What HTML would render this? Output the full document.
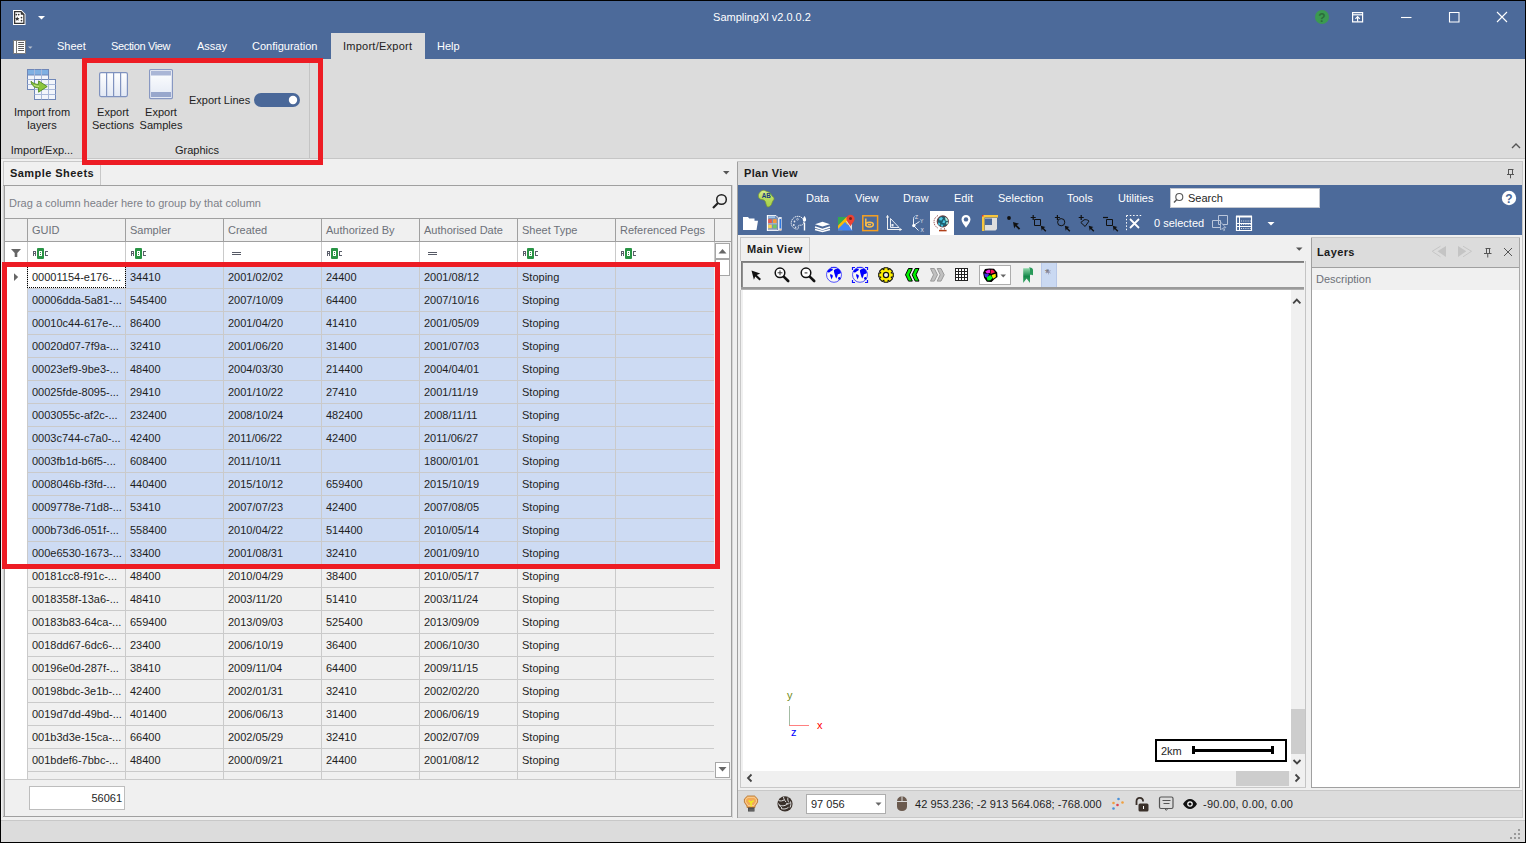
<!DOCTYPE html><html><head><meta charset="utf-8"><style>
html,body{margin:0;padding:0;}
body{width:1526px;height:843px;position:relative;overflow:hidden;background:#f0f0f0;font-family:"Liberation Sans",sans-serif;font-size:11px;}
.a{position:absolute;}
.t{position:absolute;white-space:nowrap;}
svg{display:block}
</style></head><body>
<div class="a" style="left:0px;top:0px;width:1526px;height:843px;background:#000;"></div>
<div class="a" style="left:1px;top:1px;width:1524px;height:841px;background:#f0f0f0;"></div>
<div class="a" style="left:1px;top:1px;width:1524px;height:58px;background:#4c6a9a;"></div>
<div class="t" style="left:562px;width:400px;text-align:center;top:12px;color:#fff;font-size:11px;line-height:11px;font-weight:normal;">SamplingXl v2.0.0.2</div>
<div class="t" style="left:57px;top:41px;color:#fff;font-size:11px;line-height:11px;font-weight:normal;">Sheet</div>
<div class="t" style="left:111px;top:41px;color:#fff;font-size:11px;line-height:11px;font-weight:normal;letter-spacing:-0.35px">Section View</div>
<div class="t" style="left:197px;top:41px;color:#fff;font-size:11px;line-height:11px;font-weight:normal;">Assay</div>
<div class="t" style="left:252px;top:41px;color:#fff;font-size:11px;line-height:11px;font-weight:normal;">Configuration</div>
<div class="a" style="left:331px;top:33px;width:94px;height:26px;background:#dcdcdc;"></div>
<div class="t" style="left:343px;top:41px;color:#222;font-size:11px;line-height:11px;font-weight:normal;letter-spacing:0.25px">Import/Export</div>
<div class="t" style="left:437px;top:41px;color:#fff;font-size:11px;line-height:11px;font-weight:normal;">Help</div>
<div class="a" style="left:1px;top:59px;width:1524px;height:99px;background:#dcdcdc;"></div>
<div class="a" style="left:1px;top:158px;width:1524px;height:1px;background:#c6c6c6;"></div>
<div class="t" style="left:-158px;width:400px;text-align:center;top:107px;color:#222;font-size:11px;line-height:11px;font-weight:normal;">Import from</div>
<div class="t" style="left:-158px;width:400px;text-align:center;top:120px;color:#222;font-size:11px;line-height:11px;font-weight:normal;">layers</div>
<div class="t" style="left:-158px;width:400px;text-align:center;top:145px;color:#222;font-size:11px;line-height:11px;font-weight:normal;">Import/Exp...</div>
<div class="t" style="left:-87px;width:400px;text-align:center;top:107px;color:#222;font-size:11px;line-height:11px;font-weight:normal;">Export</div>
<div class="t" style="left:-87px;width:400px;text-align:center;top:120px;color:#222;font-size:11px;line-height:11px;font-weight:normal;">Sections</div>
<div class="t" style="left:-39px;width:400px;text-align:center;top:107px;color:#222;font-size:11px;line-height:11px;font-weight:normal;">Export</div>
<div class="t" style="left:-39px;width:400px;text-align:center;top:120px;color:#222;font-size:11px;line-height:11px;font-weight:normal;">Samples</div>
<div class="t" style="left:189px;top:95px;color:#222;font-size:11px;line-height:11px;font-weight:normal;">Export Lines</div>
<div class="t" style="left:-3px;width:400px;text-align:center;top:145px;color:#222;font-size:11px;line-height:11px;font-weight:normal;">Graphics</div>
<div class="a" style="left:309px;top:63px;width:1px;height:95px;background:#c4c4c4;"></div>
<div class="a" style="left:3px;top:161px;width:98px;height:25px;background:#f0f0f0;"></div>
<div class="a" style="left:3px;top:161px;width:98px;height:1px;background:#c8c8c8;"></div>
<div class="a" style="left:3px;top:161px;width:1px;height:25px;background:#c8c8c8;"></div>
<div class="a" style="left:100px;top:161px;width:1px;height:25px;background:#c8c8c8;"></div>
<div class="t" style="left:10px;top:168px;color:#1a1a1a;font-size:11px;line-height:11px;font-weight:bold;letter-spacing:0.45px">Sample Sheets</div>
<div class="a" style="left:3px;top:185px;width:729px;height:1px;background:#a0a0a0;"></div>
<div class="a" style="left:2px;top:186px;width:1px;height:632px;background:#e6e6e6;"></div>
<div class="a" style="left:3px;top:186px;width:1px;height:631px;background:#d0d0d0;"></div>
<div class="a" style="left:4px;top:185px;width:1px;height:632px;background:#a0a0a0;"></div>
<div class="a" style="left:731px;top:185px;width:1px;height:632px;background:#a0a0a0;"></div>
<div class="a" style="left:732px;top:185px;width:1px;height:633px;background:#d6d6d6;"></div>
<div class="a" style="left:3px;top:816px;width:729px;height:1px;background:#a0a0a0;"></div>
<div class="a" style="left:5px;top:186px;width:726px;height:32px;background:#f0f0f0;"></div>
<div class="t" style="left:9px;top:198px;color:#7d8088;font-size:11px;line-height:11px;font-weight:normal;">Drag a column header here to group by that column</div>
<div class="a" style="left:5px;top:218px;width:726px;height:1px;background:#a0a0a0;"></div>
<div class="a" style="left:5px;top:219px;width:726px;height:22px;background:#f0f0f0;"></div>
<div class="a" style="left:5px;top:241px;width:726px;height:1px;background:#a0a0a0;"></div>
<div class="a" style="left:27px;top:219px;width:1px;height:22px;background:#a0a0a0;"></div>
<div class="a" style="left:125px;top:219px;width:1px;height:22px;background:#a0a0a0;"></div>
<div class="a" style="left:223px;top:219px;width:1px;height:22px;background:#a0a0a0;"></div>
<div class="a" style="left:321px;top:219px;width:1px;height:22px;background:#a0a0a0;"></div>
<div class="a" style="left:419px;top:219px;width:1px;height:22px;background:#a0a0a0;"></div>
<div class="a" style="left:517px;top:219px;width:1px;height:22px;background:#a0a0a0;"></div>
<div class="a" style="left:615px;top:219px;width:1px;height:22px;background:#a0a0a0;"></div>
<div class="a" style="left:714px;top:219px;width:1px;height:22px;background:#a0a0a0;"></div>
<div class="t" style="left:32px;top:225px;color:#6d7079;font-size:11px;line-height:11px;font-weight:normal;">GUID</div>
<div class="t" style="left:130px;top:225px;color:#6d7079;font-size:11px;line-height:11px;font-weight:normal;">Sampler</div>
<div class="t" style="left:228px;top:225px;color:#6d7079;font-size:11px;line-height:11px;font-weight:normal;">Created</div>
<div class="t" style="left:326px;top:225px;color:#6d7079;font-size:11px;line-height:11px;font-weight:normal;">Authorized By</div>
<div class="t" style="left:424px;top:225px;color:#6d7079;font-size:11px;line-height:11px;font-weight:normal;">Authorised Date</div>
<div class="t" style="left:522px;top:225px;color:#6d7079;font-size:11px;line-height:11px;font-weight:normal;">Sheet Type</div>
<div class="t" style="left:620px;top:225px;color:#6d7079;font-size:11px;line-height:11px;font-weight:normal;">Referenced Pegs</div>
<div class="a" style="left:5px;top:242px;width:710px;height:22px;background:#fff;"></div>
<div class="a" style="left:27px;top:242px;width:1px;height:22px;background:#cacaca;"></div>
<div class="a" style="left:125px;top:242px;width:1px;height:22px;background:#cacaca;"></div>
<div class="a" style="left:223px;top:242px;width:1px;height:22px;background:#cacaca;"></div>
<div class="a" style="left:321px;top:242px;width:1px;height:22px;background:#cacaca;"></div>
<div class="a" style="left:419px;top:242px;width:1px;height:22px;background:#cacaca;"></div>
<div class="a" style="left:517px;top:242px;width:1px;height:22px;background:#cacaca;"></div>
<div class="a" style="left:615px;top:242px;width:1px;height:22px;background:#cacaca;"></div>
<div class="a" style="left:714px;top:242px;width:1px;height:22px;background:#cacaca;"></div>
<div class="a" style="left:5px;top:264px;width:710px;height:1px;background:#cacaca;"></div>
<svg class="a" style="left:0;top:0" width="740" height="300" viewBox="0 0 740 300"><rect x="33" y="251" width="3" height="1" fill="#5a5e6a"/><rect x="33" y="251" width="1" height="5" fill="#5a5e6a"/><rect x="35" y="251" width="1" height="5" fill="#5a5e6a"/><rect x="33" y="253" width="3" height="1" fill="#5a5e6a"/><rect x="37" y="248" width="7" height="11" rx="1" fill="#2a9446"/><rect x="39" y="251" width="3" height="5" fill="#fff"/><rect x="40" y="252" width="1" height="1" fill="#2a9446"/><rect x="40" y="254" width="1" height="1" fill="#2a9446"/><rect x="45" y="251" width="3" height="1" fill="#5a5e6a"/><rect x="45" y="251" width="1" height="5" fill="#5a5e6a"/><rect x="45" y="255" width="3" height="1" fill="#5a5e6a"/><rect x="131" y="251" width="3" height="1" fill="#5a5e6a"/><rect x="131" y="251" width="1" height="5" fill="#5a5e6a"/><rect x="133" y="251" width="1" height="5" fill="#5a5e6a"/><rect x="131" y="253" width="3" height="1" fill="#5a5e6a"/><rect x="135" y="248" width="7" height="11" rx="1" fill="#2a9446"/><rect x="137" y="251" width="3" height="5" fill="#fff"/><rect x="138" y="252" width="1" height="1" fill="#2a9446"/><rect x="138" y="254" width="1" height="1" fill="#2a9446"/><rect x="143" y="251" width="3" height="1" fill="#5a5e6a"/><rect x="143" y="251" width="1" height="5" fill="#5a5e6a"/><rect x="143" y="255" width="3" height="1" fill="#5a5e6a"/><path d="M232 252.5h9M232 254.5h9" stroke="#565a66" stroke-width="1"/><rect x="327" y="251" width="3" height="1" fill="#5a5e6a"/><rect x="327" y="251" width="1" height="5" fill="#5a5e6a"/><rect x="329" y="251" width="1" height="5" fill="#5a5e6a"/><rect x="327" y="253" width="3" height="1" fill="#5a5e6a"/><rect x="331" y="248" width="7" height="11" rx="1" fill="#2a9446"/><rect x="333" y="251" width="3" height="5" fill="#fff"/><rect x="334" y="252" width="1" height="1" fill="#2a9446"/><rect x="334" y="254" width="1" height="1" fill="#2a9446"/><rect x="339" y="251" width="3" height="1" fill="#5a5e6a"/><rect x="339" y="251" width="1" height="5" fill="#5a5e6a"/><rect x="339" y="255" width="3" height="1" fill="#5a5e6a"/><path d="M428 252.5h9M428 254.5h9" stroke="#565a66" stroke-width="1"/><rect x="523" y="251" width="3" height="1" fill="#5a5e6a"/><rect x="523" y="251" width="1" height="5" fill="#5a5e6a"/><rect x="525" y="251" width="1" height="5" fill="#5a5e6a"/><rect x="523" y="253" width="3" height="1" fill="#5a5e6a"/><rect x="527" y="248" width="7" height="11" rx="1" fill="#2a9446"/><rect x="529" y="251" width="3" height="5" fill="#fff"/><rect x="530" y="252" width="1" height="1" fill="#2a9446"/><rect x="530" y="254" width="1" height="1" fill="#2a9446"/><rect x="535" y="251" width="3" height="1" fill="#5a5e6a"/><rect x="535" y="251" width="1" height="5" fill="#5a5e6a"/><rect x="535" y="255" width="3" height="1" fill="#5a5e6a"/><rect x="621" y="251" width="3" height="1" fill="#5a5e6a"/><rect x="621" y="251" width="1" height="5" fill="#5a5e6a"/><rect x="623" y="251" width="1" height="5" fill="#5a5e6a"/><rect x="621" y="253" width="3" height="1" fill="#5a5e6a"/><rect x="625" y="248" width="7" height="11" rx="1" fill="#2a9446"/><rect x="627" y="251" width="3" height="5" fill="#fff"/><rect x="628" y="252" width="1" height="1" fill="#2a9446"/><rect x="628" y="254" width="1" height="1" fill="#2a9446"/><rect x="633" y="251" width="3" height="1" fill="#5a5e6a"/><rect x="633" y="251" width="1" height="5" fill="#5a5e6a"/><rect x="633" y="255" width="3" height="1" fill="#5a5e6a"/></svg>
<div class="a" style="left:5px;top:266px;width:710px;height:513px;overflow:hidden">
<div class="a" style="left:0px;top:0px;width:22px;height:23px;background:#fff"></div>
<div class="a" style="left:22px;top:0px;width:687px;height:22px;background:#cddbf3"></div>
<div class="a" style="left:22px;top:22px;width:687px;height:1px;background:#cacaca"></div>
<div class="a" style="left:120px;top:0px;width:1px;height:23px;background:#cacaca"></div>
<div class="a" style="left:218px;top:0px;width:1px;height:23px;background:#cacaca"></div>
<div class="a" style="left:316px;top:0px;width:1px;height:23px;background:#cacaca"></div>
<div class="a" style="left:414px;top:0px;width:1px;height:23px;background:#cacaca"></div>
<div class="a" style="left:512px;top:0px;width:1px;height:23px;background:#cacaca"></div>
<div class="a" style="left:610px;top:0px;width:1px;height:23px;background:#cacaca"></div>
<div class="t" style="left:27px;top:6px;font-size:11px;line-height:11px;color:#1e1e1e">00001154-e176-...</div>
<div class="t" style="left:125px;top:6px;font-size:11px;line-height:11px;color:#1e1e1e">34410</div>
<div class="t" style="left:223px;top:6px;font-size:11px;line-height:11px;color:#1e1e1e">2001/02/02</div>
<div class="t" style="left:321px;top:6px;font-size:11px;line-height:11px;color:#1e1e1e">24400</div>
<div class="t" style="left:419px;top:6px;font-size:11px;line-height:11px;color:#1e1e1e">2001/08/12</div>
<div class="t" style="left:517px;top:6px;font-size:11px;line-height:11px;color:#1e1e1e">Stoping</div>
<div class="a" style="left:0px;top:23px;width:22px;height:23px;background:#fff"></div>
<div class="a" style="left:22px;top:23px;width:687px;height:22px;background:#cddbf3"></div>
<div class="a" style="left:22px;top:45px;width:687px;height:1px;background:#cacaca"></div>
<div class="a" style="left:120px;top:23px;width:1px;height:23px;background:#cacaca"></div>
<div class="a" style="left:218px;top:23px;width:1px;height:23px;background:#cacaca"></div>
<div class="a" style="left:316px;top:23px;width:1px;height:23px;background:#cacaca"></div>
<div class="a" style="left:414px;top:23px;width:1px;height:23px;background:#cacaca"></div>
<div class="a" style="left:512px;top:23px;width:1px;height:23px;background:#cacaca"></div>
<div class="a" style="left:610px;top:23px;width:1px;height:23px;background:#cacaca"></div>
<div class="t" style="left:27px;top:29px;font-size:11px;line-height:11px;color:#1e1e1e">00006dda-5a81-...</div>
<div class="t" style="left:125px;top:29px;font-size:11px;line-height:11px;color:#1e1e1e">545400</div>
<div class="t" style="left:223px;top:29px;font-size:11px;line-height:11px;color:#1e1e1e">2007/10/09</div>
<div class="t" style="left:321px;top:29px;font-size:11px;line-height:11px;color:#1e1e1e">64400</div>
<div class="t" style="left:419px;top:29px;font-size:11px;line-height:11px;color:#1e1e1e">2007/10/16</div>
<div class="t" style="left:517px;top:29px;font-size:11px;line-height:11px;color:#1e1e1e">Stoping</div>
<div class="a" style="left:0px;top:46px;width:22px;height:23px;background:#fff"></div>
<div class="a" style="left:22px;top:46px;width:687px;height:22px;background:#cddbf3"></div>
<div class="a" style="left:22px;top:68px;width:687px;height:1px;background:#cacaca"></div>
<div class="a" style="left:120px;top:46px;width:1px;height:23px;background:#cacaca"></div>
<div class="a" style="left:218px;top:46px;width:1px;height:23px;background:#cacaca"></div>
<div class="a" style="left:316px;top:46px;width:1px;height:23px;background:#cacaca"></div>
<div class="a" style="left:414px;top:46px;width:1px;height:23px;background:#cacaca"></div>
<div class="a" style="left:512px;top:46px;width:1px;height:23px;background:#cacaca"></div>
<div class="a" style="left:610px;top:46px;width:1px;height:23px;background:#cacaca"></div>
<div class="t" style="left:27px;top:52px;font-size:11px;line-height:11px;color:#1e1e1e">00010c44-617e-...</div>
<div class="t" style="left:125px;top:52px;font-size:11px;line-height:11px;color:#1e1e1e">86400</div>
<div class="t" style="left:223px;top:52px;font-size:11px;line-height:11px;color:#1e1e1e">2001/04/20</div>
<div class="t" style="left:321px;top:52px;font-size:11px;line-height:11px;color:#1e1e1e">41410</div>
<div class="t" style="left:419px;top:52px;font-size:11px;line-height:11px;color:#1e1e1e">2001/05/09</div>
<div class="t" style="left:517px;top:52px;font-size:11px;line-height:11px;color:#1e1e1e">Stoping</div>
<div class="a" style="left:0px;top:69px;width:22px;height:23px;background:#fff"></div>
<div class="a" style="left:22px;top:69px;width:687px;height:22px;background:#cddbf3"></div>
<div class="a" style="left:22px;top:91px;width:687px;height:1px;background:#cacaca"></div>
<div class="a" style="left:120px;top:69px;width:1px;height:23px;background:#cacaca"></div>
<div class="a" style="left:218px;top:69px;width:1px;height:23px;background:#cacaca"></div>
<div class="a" style="left:316px;top:69px;width:1px;height:23px;background:#cacaca"></div>
<div class="a" style="left:414px;top:69px;width:1px;height:23px;background:#cacaca"></div>
<div class="a" style="left:512px;top:69px;width:1px;height:23px;background:#cacaca"></div>
<div class="a" style="left:610px;top:69px;width:1px;height:23px;background:#cacaca"></div>
<div class="t" style="left:27px;top:75px;font-size:11px;line-height:11px;color:#1e1e1e">00020d07-7f9a-...</div>
<div class="t" style="left:125px;top:75px;font-size:11px;line-height:11px;color:#1e1e1e">32410</div>
<div class="t" style="left:223px;top:75px;font-size:11px;line-height:11px;color:#1e1e1e">2001/06/20</div>
<div class="t" style="left:321px;top:75px;font-size:11px;line-height:11px;color:#1e1e1e">31400</div>
<div class="t" style="left:419px;top:75px;font-size:11px;line-height:11px;color:#1e1e1e">2001/07/03</div>
<div class="t" style="left:517px;top:75px;font-size:11px;line-height:11px;color:#1e1e1e">Stoping</div>
<div class="a" style="left:0px;top:92px;width:22px;height:23px;background:#fff"></div>
<div class="a" style="left:22px;top:92px;width:687px;height:22px;background:#cddbf3"></div>
<div class="a" style="left:22px;top:114px;width:687px;height:1px;background:#cacaca"></div>
<div class="a" style="left:120px;top:92px;width:1px;height:23px;background:#cacaca"></div>
<div class="a" style="left:218px;top:92px;width:1px;height:23px;background:#cacaca"></div>
<div class="a" style="left:316px;top:92px;width:1px;height:23px;background:#cacaca"></div>
<div class="a" style="left:414px;top:92px;width:1px;height:23px;background:#cacaca"></div>
<div class="a" style="left:512px;top:92px;width:1px;height:23px;background:#cacaca"></div>
<div class="a" style="left:610px;top:92px;width:1px;height:23px;background:#cacaca"></div>
<div class="t" style="left:27px;top:98px;font-size:11px;line-height:11px;color:#1e1e1e">00023ef9-9be3-...</div>
<div class="t" style="left:125px;top:98px;font-size:11px;line-height:11px;color:#1e1e1e">48400</div>
<div class="t" style="left:223px;top:98px;font-size:11px;line-height:11px;color:#1e1e1e">2004/03/30</div>
<div class="t" style="left:321px;top:98px;font-size:11px;line-height:11px;color:#1e1e1e">214400</div>
<div class="t" style="left:419px;top:98px;font-size:11px;line-height:11px;color:#1e1e1e">2004/04/01</div>
<div class="t" style="left:517px;top:98px;font-size:11px;line-height:11px;color:#1e1e1e">Stoping</div>
<div class="a" style="left:0px;top:115px;width:22px;height:23px;background:#fff"></div>
<div class="a" style="left:22px;top:115px;width:687px;height:22px;background:#cddbf3"></div>
<div class="a" style="left:22px;top:137px;width:687px;height:1px;background:#cacaca"></div>
<div class="a" style="left:120px;top:115px;width:1px;height:23px;background:#cacaca"></div>
<div class="a" style="left:218px;top:115px;width:1px;height:23px;background:#cacaca"></div>
<div class="a" style="left:316px;top:115px;width:1px;height:23px;background:#cacaca"></div>
<div class="a" style="left:414px;top:115px;width:1px;height:23px;background:#cacaca"></div>
<div class="a" style="left:512px;top:115px;width:1px;height:23px;background:#cacaca"></div>
<div class="a" style="left:610px;top:115px;width:1px;height:23px;background:#cacaca"></div>
<div class="t" style="left:27px;top:121px;font-size:11px;line-height:11px;color:#1e1e1e">00025fde-8095-...</div>
<div class="t" style="left:125px;top:121px;font-size:11px;line-height:11px;color:#1e1e1e">29410</div>
<div class="t" style="left:223px;top:121px;font-size:11px;line-height:11px;color:#1e1e1e">2001/10/22</div>
<div class="t" style="left:321px;top:121px;font-size:11px;line-height:11px;color:#1e1e1e">27410</div>
<div class="t" style="left:419px;top:121px;font-size:11px;line-height:11px;color:#1e1e1e">2001/11/19</div>
<div class="t" style="left:517px;top:121px;font-size:11px;line-height:11px;color:#1e1e1e">Stoping</div>
<div class="a" style="left:0px;top:138px;width:22px;height:23px;background:#fff"></div>
<div class="a" style="left:22px;top:138px;width:687px;height:22px;background:#cddbf3"></div>
<div class="a" style="left:22px;top:160px;width:687px;height:1px;background:#cacaca"></div>
<div class="a" style="left:120px;top:138px;width:1px;height:23px;background:#cacaca"></div>
<div class="a" style="left:218px;top:138px;width:1px;height:23px;background:#cacaca"></div>
<div class="a" style="left:316px;top:138px;width:1px;height:23px;background:#cacaca"></div>
<div class="a" style="left:414px;top:138px;width:1px;height:23px;background:#cacaca"></div>
<div class="a" style="left:512px;top:138px;width:1px;height:23px;background:#cacaca"></div>
<div class="a" style="left:610px;top:138px;width:1px;height:23px;background:#cacaca"></div>
<div class="t" style="left:27px;top:144px;font-size:11px;line-height:11px;color:#1e1e1e">0003055c-af2c-...</div>
<div class="t" style="left:125px;top:144px;font-size:11px;line-height:11px;color:#1e1e1e">232400</div>
<div class="t" style="left:223px;top:144px;font-size:11px;line-height:11px;color:#1e1e1e">2008/10/24</div>
<div class="t" style="left:321px;top:144px;font-size:11px;line-height:11px;color:#1e1e1e">482400</div>
<div class="t" style="left:419px;top:144px;font-size:11px;line-height:11px;color:#1e1e1e">2008/11/11</div>
<div class="t" style="left:517px;top:144px;font-size:11px;line-height:11px;color:#1e1e1e">Stoping</div>
<div class="a" style="left:0px;top:161px;width:22px;height:23px;background:#fff"></div>
<div class="a" style="left:22px;top:161px;width:687px;height:22px;background:#cddbf3"></div>
<div class="a" style="left:22px;top:183px;width:687px;height:1px;background:#cacaca"></div>
<div class="a" style="left:120px;top:161px;width:1px;height:23px;background:#cacaca"></div>
<div class="a" style="left:218px;top:161px;width:1px;height:23px;background:#cacaca"></div>
<div class="a" style="left:316px;top:161px;width:1px;height:23px;background:#cacaca"></div>
<div class="a" style="left:414px;top:161px;width:1px;height:23px;background:#cacaca"></div>
<div class="a" style="left:512px;top:161px;width:1px;height:23px;background:#cacaca"></div>
<div class="a" style="left:610px;top:161px;width:1px;height:23px;background:#cacaca"></div>
<div class="t" style="left:27px;top:167px;font-size:11px;line-height:11px;color:#1e1e1e">0003c744-c7a0-...</div>
<div class="t" style="left:125px;top:167px;font-size:11px;line-height:11px;color:#1e1e1e">42400</div>
<div class="t" style="left:223px;top:167px;font-size:11px;line-height:11px;color:#1e1e1e">2011/06/22</div>
<div class="t" style="left:321px;top:167px;font-size:11px;line-height:11px;color:#1e1e1e">42400</div>
<div class="t" style="left:419px;top:167px;font-size:11px;line-height:11px;color:#1e1e1e">2011/06/27</div>
<div class="t" style="left:517px;top:167px;font-size:11px;line-height:11px;color:#1e1e1e">Stoping</div>
<div class="a" style="left:0px;top:184px;width:22px;height:23px;background:#fff"></div>
<div class="a" style="left:22px;top:184px;width:687px;height:22px;background:#cddbf3"></div>
<div class="a" style="left:22px;top:206px;width:687px;height:1px;background:#cacaca"></div>
<div class="a" style="left:120px;top:184px;width:1px;height:23px;background:#cacaca"></div>
<div class="a" style="left:218px;top:184px;width:1px;height:23px;background:#cacaca"></div>
<div class="a" style="left:316px;top:184px;width:1px;height:23px;background:#cacaca"></div>
<div class="a" style="left:414px;top:184px;width:1px;height:23px;background:#cacaca"></div>
<div class="a" style="left:512px;top:184px;width:1px;height:23px;background:#cacaca"></div>
<div class="a" style="left:610px;top:184px;width:1px;height:23px;background:#cacaca"></div>
<div class="t" style="left:27px;top:190px;font-size:11px;line-height:11px;color:#1e1e1e">0003fb1d-b6f5-...</div>
<div class="t" style="left:125px;top:190px;font-size:11px;line-height:11px;color:#1e1e1e">608400</div>
<div class="t" style="left:223px;top:190px;font-size:11px;line-height:11px;color:#1e1e1e">2011/10/11</div>
<div class="t" style="left:419px;top:190px;font-size:11px;line-height:11px;color:#1e1e1e">1800/01/01</div>
<div class="t" style="left:517px;top:190px;font-size:11px;line-height:11px;color:#1e1e1e">Stoping</div>
<div class="a" style="left:0px;top:207px;width:22px;height:23px;background:#fff"></div>
<div class="a" style="left:22px;top:207px;width:687px;height:22px;background:#cddbf3"></div>
<div class="a" style="left:22px;top:229px;width:687px;height:1px;background:#cacaca"></div>
<div class="a" style="left:120px;top:207px;width:1px;height:23px;background:#cacaca"></div>
<div class="a" style="left:218px;top:207px;width:1px;height:23px;background:#cacaca"></div>
<div class="a" style="left:316px;top:207px;width:1px;height:23px;background:#cacaca"></div>
<div class="a" style="left:414px;top:207px;width:1px;height:23px;background:#cacaca"></div>
<div class="a" style="left:512px;top:207px;width:1px;height:23px;background:#cacaca"></div>
<div class="a" style="left:610px;top:207px;width:1px;height:23px;background:#cacaca"></div>
<div class="t" style="left:27px;top:213px;font-size:11px;line-height:11px;color:#1e1e1e">0008046b-f3fd-...</div>
<div class="t" style="left:125px;top:213px;font-size:11px;line-height:11px;color:#1e1e1e">440400</div>
<div class="t" style="left:223px;top:213px;font-size:11px;line-height:11px;color:#1e1e1e">2015/10/12</div>
<div class="t" style="left:321px;top:213px;font-size:11px;line-height:11px;color:#1e1e1e">659400</div>
<div class="t" style="left:419px;top:213px;font-size:11px;line-height:11px;color:#1e1e1e">2015/10/19</div>
<div class="t" style="left:517px;top:213px;font-size:11px;line-height:11px;color:#1e1e1e">Stoping</div>
<div class="a" style="left:0px;top:230px;width:22px;height:23px;background:#fff"></div>
<div class="a" style="left:22px;top:230px;width:687px;height:22px;background:#cddbf3"></div>
<div class="a" style="left:22px;top:252px;width:687px;height:1px;background:#cacaca"></div>
<div class="a" style="left:120px;top:230px;width:1px;height:23px;background:#cacaca"></div>
<div class="a" style="left:218px;top:230px;width:1px;height:23px;background:#cacaca"></div>
<div class="a" style="left:316px;top:230px;width:1px;height:23px;background:#cacaca"></div>
<div class="a" style="left:414px;top:230px;width:1px;height:23px;background:#cacaca"></div>
<div class="a" style="left:512px;top:230px;width:1px;height:23px;background:#cacaca"></div>
<div class="a" style="left:610px;top:230px;width:1px;height:23px;background:#cacaca"></div>
<div class="t" style="left:27px;top:236px;font-size:11px;line-height:11px;color:#1e1e1e">0009778e-71d8-...</div>
<div class="t" style="left:125px;top:236px;font-size:11px;line-height:11px;color:#1e1e1e">53410</div>
<div class="t" style="left:223px;top:236px;font-size:11px;line-height:11px;color:#1e1e1e">2007/07/23</div>
<div class="t" style="left:321px;top:236px;font-size:11px;line-height:11px;color:#1e1e1e">42400</div>
<div class="t" style="left:419px;top:236px;font-size:11px;line-height:11px;color:#1e1e1e">2007/08/05</div>
<div class="t" style="left:517px;top:236px;font-size:11px;line-height:11px;color:#1e1e1e">Stoping</div>
<div class="a" style="left:0px;top:253px;width:22px;height:23px;background:#fff"></div>
<div class="a" style="left:22px;top:253px;width:687px;height:22px;background:#cddbf3"></div>
<div class="a" style="left:22px;top:275px;width:687px;height:1px;background:#cacaca"></div>
<div class="a" style="left:120px;top:253px;width:1px;height:23px;background:#cacaca"></div>
<div class="a" style="left:218px;top:253px;width:1px;height:23px;background:#cacaca"></div>
<div class="a" style="left:316px;top:253px;width:1px;height:23px;background:#cacaca"></div>
<div class="a" style="left:414px;top:253px;width:1px;height:23px;background:#cacaca"></div>
<div class="a" style="left:512px;top:253px;width:1px;height:23px;background:#cacaca"></div>
<div class="a" style="left:610px;top:253px;width:1px;height:23px;background:#cacaca"></div>
<div class="t" style="left:27px;top:259px;font-size:11px;line-height:11px;color:#1e1e1e">000b73d6-051f-...</div>
<div class="t" style="left:125px;top:259px;font-size:11px;line-height:11px;color:#1e1e1e">558400</div>
<div class="t" style="left:223px;top:259px;font-size:11px;line-height:11px;color:#1e1e1e">2010/04/22</div>
<div class="t" style="left:321px;top:259px;font-size:11px;line-height:11px;color:#1e1e1e">514400</div>
<div class="t" style="left:419px;top:259px;font-size:11px;line-height:11px;color:#1e1e1e">2010/05/14</div>
<div class="t" style="left:517px;top:259px;font-size:11px;line-height:11px;color:#1e1e1e">Stoping</div>
<div class="a" style="left:0px;top:276px;width:22px;height:23px;background:#fff"></div>
<div class="a" style="left:22px;top:276px;width:687px;height:22px;background:#cddbf3"></div>
<div class="a" style="left:22px;top:298px;width:687px;height:1px;background:#cacaca"></div>
<div class="a" style="left:120px;top:276px;width:1px;height:23px;background:#cacaca"></div>
<div class="a" style="left:218px;top:276px;width:1px;height:23px;background:#cacaca"></div>
<div class="a" style="left:316px;top:276px;width:1px;height:23px;background:#cacaca"></div>
<div class="a" style="left:414px;top:276px;width:1px;height:23px;background:#cacaca"></div>
<div class="a" style="left:512px;top:276px;width:1px;height:23px;background:#cacaca"></div>
<div class="a" style="left:610px;top:276px;width:1px;height:23px;background:#cacaca"></div>
<div class="t" style="left:27px;top:282px;font-size:11px;line-height:11px;color:#1e1e1e">000e6530-1673-...</div>
<div class="t" style="left:125px;top:282px;font-size:11px;line-height:11px;color:#1e1e1e">33400</div>
<div class="t" style="left:223px;top:282px;font-size:11px;line-height:11px;color:#1e1e1e">2001/08/31</div>
<div class="t" style="left:321px;top:282px;font-size:11px;line-height:11px;color:#1e1e1e">32410</div>
<div class="t" style="left:419px;top:282px;font-size:11px;line-height:11px;color:#1e1e1e">2001/09/10</div>
<div class="t" style="left:517px;top:282px;font-size:11px;line-height:11px;color:#1e1e1e">Stoping</div>
<div class="a" style="left:0px;top:299px;width:22px;height:23px;background:#fff"></div>
<div class="a" style="left:22px;top:299px;width:687px;height:22px;background:#f0f0f0"></div>
<div class="a" style="left:22px;top:321px;width:687px;height:1px;background:#cacaca"></div>
<div class="a" style="left:120px;top:299px;width:1px;height:23px;background:#cacaca"></div>
<div class="a" style="left:218px;top:299px;width:1px;height:23px;background:#cacaca"></div>
<div class="a" style="left:316px;top:299px;width:1px;height:23px;background:#cacaca"></div>
<div class="a" style="left:414px;top:299px;width:1px;height:23px;background:#cacaca"></div>
<div class="a" style="left:512px;top:299px;width:1px;height:23px;background:#cacaca"></div>
<div class="a" style="left:610px;top:299px;width:1px;height:23px;background:#cacaca"></div>
<div class="t" style="left:27px;top:305px;font-size:11px;line-height:11px;color:#1e1e1e">00181cc8-f91c-...</div>
<div class="t" style="left:125px;top:305px;font-size:11px;line-height:11px;color:#1e1e1e">48400</div>
<div class="t" style="left:223px;top:305px;font-size:11px;line-height:11px;color:#1e1e1e">2010/04/29</div>
<div class="t" style="left:321px;top:305px;font-size:11px;line-height:11px;color:#1e1e1e">38400</div>
<div class="t" style="left:419px;top:305px;font-size:11px;line-height:11px;color:#1e1e1e">2010/05/17</div>
<div class="t" style="left:517px;top:305px;font-size:11px;line-height:11px;color:#1e1e1e">Stoping</div>
<div class="a" style="left:0px;top:322px;width:22px;height:23px;background:#fff"></div>
<div class="a" style="left:22px;top:322px;width:687px;height:22px;background:#f0f0f0"></div>
<div class="a" style="left:22px;top:344px;width:687px;height:1px;background:#cacaca"></div>
<div class="a" style="left:120px;top:322px;width:1px;height:23px;background:#cacaca"></div>
<div class="a" style="left:218px;top:322px;width:1px;height:23px;background:#cacaca"></div>
<div class="a" style="left:316px;top:322px;width:1px;height:23px;background:#cacaca"></div>
<div class="a" style="left:414px;top:322px;width:1px;height:23px;background:#cacaca"></div>
<div class="a" style="left:512px;top:322px;width:1px;height:23px;background:#cacaca"></div>
<div class="a" style="left:610px;top:322px;width:1px;height:23px;background:#cacaca"></div>
<div class="t" style="left:27px;top:328px;font-size:11px;line-height:11px;color:#1e1e1e">0018358f-13a6-...</div>
<div class="t" style="left:125px;top:328px;font-size:11px;line-height:11px;color:#1e1e1e">48410</div>
<div class="t" style="left:223px;top:328px;font-size:11px;line-height:11px;color:#1e1e1e">2003/11/20</div>
<div class="t" style="left:321px;top:328px;font-size:11px;line-height:11px;color:#1e1e1e">51410</div>
<div class="t" style="left:419px;top:328px;font-size:11px;line-height:11px;color:#1e1e1e">2003/11/24</div>
<div class="t" style="left:517px;top:328px;font-size:11px;line-height:11px;color:#1e1e1e">Stoping</div>
<div class="a" style="left:0px;top:345px;width:22px;height:23px;background:#fff"></div>
<div class="a" style="left:22px;top:345px;width:687px;height:22px;background:#f0f0f0"></div>
<div class="a" style="left:22px;top:367px;width:687px;height:1px;background:#cacaca"></div>
<div class="a" style="left:120px;top:345px;width:1px;height:23px;background:#cacaca"></div>
<div class="a" style="left:218px;top:345px;width:1px;height:23px;background:#cacaca"></div>
<div class="a" style="left:316px;top:345px;width:1px;height:23px;background:#cacaca"></div>
<div class="a" style="left:414px;top:345px;width:1px;height:23px;background:#cacaca"></div>
<div class="a" style="left:512px;top:345px;width:1px;height:23px;background:#cacaca"></div>
<div class="a" style="left:610px;top:345px;width:1px;height:23px;background:#cacaca"></div>
<div class="t" style="left:27px;top:351px;font-size:11px;line-height:11px;color:#1e1e1e">00183b83-64ca-...</div>
<div class="t" style="left:125px;top:351px;font-size:11px;line-height:11px;color:#1e1e1e">659400</div>
<div class="t" style="left:223px;top:351px;font-size:11px;line-height:11px;color:#1e1e1e">2013/09/03</div>
<div class="t" style="left:321px;top:351px;font-size:11px;line-height:11px;color:#1e1e1e">525400</div>
<div class="t" style="left:419px;top:351px;font-size:11px;line-height:11px;color:#1e1e1e">2013/09/09</div>
<div class="t" style="left:517px;top:351px;font-size:11px;line-height:11px;color:#1e1e1e">Stoping</div>
<div class="a" style="left:0px;top:368px;width:22px;height:23px;background:#fff"></div>
<div class="a" style="left:22px;top:368px;width:687px;height:22px;background:#f0f0f0"></div>
<div class="a" style="left:22px;top:390px;width:687px;height:1px;background:#cacaca"></div>
<div class="a" style="left:120px;top:368px;width:1px;height:23px;background:#cacaca"></div>
<div class="a" style="left:218px;top:368px;width:1px;height:23px;background:#cacaca"></div>
<div class="a" style="left:316px;top:368px;width:1px;height:23px;background:#cacaca"></div>
<div class="a" style="left:414px;top:368px;width:1px;height:23px;background:#cacaca"></div>
<div class="a" style="left:512px;top:368px;width:1px;height:23px;background:#cacaca"></div>
<div class="a" style="left:610px;top:368px;width:1px;height:23px;background:#cacaca"></div>
<div class="t" style="left:27px;top:374px;font-size:11px;line-height:11px;color:#1e1e1e">0018dd67-6dc6-...</div>
<div class="t" style="left:125px;top:374px;font-size:11px;line-height:11px;color:#1e1e1e">23400</div>
<div class="t" style="left:223px;top:374px;font-size:11px;line-height:11px;color:#1e1e1e">2006/10/19</div>
<div class="t" style="left:321px;top:374px;font-size:11px;line-height:11px;color:#1e1e1e">36400</div>
<div class="t" style="left:419px;top:374px;font-size:11px;line-height:11px;color:#1e1e1e">2006/10/30</div>
<div class="t" style="left:517px;top:374px;font-size:11px;line-height:11px;color:#1e1e1e">Stoping</div>
<div class="a" style="left:0px;top:391px;width:22px;height:23px;background:#fff"></div>
<div class="a" style="left:22px;top:391px;width:687px;height:22px;background:#f0f0f0"></div>
<div class="a" style="left:22px;top:413px;width:687px;height:1px;background:#cacaca"></div>
<div class="a" style="left:120px;top:391px;width:1px;height:23px;background:#cacaca"></div>
<div class="a" style="left:218px;top:391px;width:1px;height:23px;background:#cacaca"></div>
<div class="a" style="left:316px;top:391px;width:1px;height:23px;background:#cacaca"></div>
<div class="a" style="left:414px;top:391px;width:1px;height:23px;background:#cacaca"></div>
<div class="a" style="left:512px;top:391px;width:1px;height:23px;background:#cacaca"></div>
<div class="a" style="left:610px;top:391px;width:1px;height:23px;background:#cacaca"></div>
<div class="t" style="left:27px;top:397px;font-size:11px;line-height:11px;color:#1e1e1e">00196e0d-287f-...</div>
<div class="t" style="left:125px;top:397px;font-size:11px;line-height:11px;color:#1e1e1e">38410</div>
<div class="t" style="left:223px;top:397px;font-size:11px;line-height:11px;color:#1e1e1e">2009/11/04</div>
<div class="t" style="left:321px;top:397px;font-size:11px;line-height:11px;color:#1e1e1e">64400</div>
<div class="t" style="left:419px;top:397px;font-size:11px;line-height:11px;color:#1e1e1e">2009/11/15</div>
<div class="t" style="left:517px;top:397px;font-size:11px;line-height:11px;color:#1e1e1e">Stoping</div>
<div class="a" style="left:0px;top:414px;width:22px;height:23px;background:#fff"></div>
<div class="a" style="left:22px;top:414px;width:687px;height:22px;background:#f0f0f0"></div>
<div class="a" style="left:22px;top:436px;width:687px;height:1px;background:#cacaca"></div>
<div class="a" style="left:120px;top:414px;width:1px;height:23px;background:#cacaca"></div>
<div class="a" style="left:218px;top:414px;width:1px;height:23px;background:#cacaca"></div>
<div class="a" style="left:316px;top:414px;width:1px;height:23px;background:#cacaca"></div>
<div class="a" style="left:414px;top:414px;width:1px;height:23px;background:#cacaca"></div>
<div class="a" style="left:512px;top:414px;width:1px;height:23px;background:#cacaca"></div>
<div class="a" style="left:610px;top:414px;width:1px;height:23px;background:#cacaca"></div>
<div class="t" style="left:27px;top:420px;font-size:11px;line-height:11px;color:#1e1e1e">00198bdc-3e1b-...</div>
<div class="t" style="left:125px;top:420px;font-size:11px;line-height:11px;color:#1e1e1e">42400</div>
<div class="t" style="left:223px;top:420px;font-size:11px;line-height:11px;color:#1e1e1e">2002/01/31</div>
<div class="t" style="left:321px;top:420px;font-size:11px;line-height:11px;color:#1e1e1e">32410</div>
<div class="t" style="left:419px;top:420px;font-size:11px;line-height:11px;color:#1e1e1e">2002/02/20</div>
<div class="t" style="left:517px;top:420px;font-size:11px;line-height:11px;color:#1e1e1e">Stoping</div>
<div class="a" style="left:0px;top:437px;width:22px;height:23px;background:#fff"></div>
<div class="a" style="left:22px;top:437px;width:687px;height:22px;background:#f0f0f0"></div>
<div class="a" style="left:22px;top:459px;width:687px;height:1px;background:#cacaca"></div>
<div class="a" style="left:120px;top:437px;width:1px;height:23px;background:#cacaca"></div>
<div class="a" style="left:218px;top:437px;width:1px;height:23px;background:#cacaca"></div>
<div class="a" style="left:316px;top:437px;width:1px;height:23px;background:#cacaca"></div>
<div class="a" style="left:414px;top:437px;width:1px;height:23px;background:#cacaca"></div>
<div class="a" style="left:512px;top:437px;width:1px;height:23px;background:#cacaca"></div>
<div class="a" style="left:610px;top:437px;width:1px;height:23px;background:#cacaca"></div>
<div class="t" style="left:27px;top:443px;font-size:11px;line-height:11px;color:#1e1e1e">0019d7dd-49bd-...</div>
<div class="t" style="left:125px;top:443px;font-size:11px;line-height:11px;color:#1e1e1e">401400</div>
<div class="t" style="left:223px;top:443px;font-size:11px;line-height:11px;color:#1e1e1e">2006/06/13</div>
<div class="t" style="left:321px;top:443px;font-size:11px;line-height:11px;color:#1e1e1e">31400</div>
<div class="t" style="left:419px;top:443px;font-size:11px;line-height:11px;color:#1e1e1e">2006/06/19</div>
<div class="t" style="left:517px;top:443px;font-size:11px;line-height:11px;color:#1e1e1e">Stoping</div>
<div class="a" style="left:0px;top:460px;width:22px;height:23px;background:#fff"></div>
<div class="a" style="left:22px;top:460px;width:687px;height:22px;background:#f0f0f0"></div>
<div class="a" style="left:22px;top:482px;width:687px;height:1px;background:#cacaca"></div>
<div class="a" style="left:120px;top:460px;width:1px;height:23px;background:#cacaca"></div>
<div class="a" style="left:218px;top:460px;width:1px;height:23px;background:#cacaca"></div>
<div class="a" style="left:316px;top:460px;width:1px;height:23px;background:#cacaca"></div>
<div class="a" style="left:414px;top:460px;width:1px;height:23px;background:#cacaca"></div>
<div class="a" style="left:512px;top:460px;width:1px;height:23px;background:#cacaca"></div>
<div class="a" style="left:610px;top:460px;width:1px;height:23px;background:#cacaca"></div>
<div class="t" style="left:27px;top:466px;font-size:11px;line-height:11px;color:#1e1e1e">001b3d3e-15ca-...</div>
<div class="t" style="left:125px;top:466px;font-size:11px;line-height:11px;color:#1e1e1e">66400</div>
<div class="t" style="left:223px;top:466px;font-size:11px;line-height:11px;color:#1e1e1e">2002/05/29</div>
<div class="t" style="left:321px;top:466px;font-size:11px;line-height:11px;color:#1e1e1e">32410</div>
<div class="t" style="left:419px;top:466px;font-size:11px;line-height:11px;color:#1e1e1e">2002/07/09</div>
<div class="t" style="left:517px;top:466px;font-size:11px;line-height:11px;color:#1e1e1e">Stoping</div>
<div class="a" style="left:0px;top:483px;width:22px;height:23px;background:#fff"></div>
<div class="a" style="left:22px;top:483px;width:687px;height:22px;background:#f0f0f0"></div>
<div class="a" style="left:22px;top:505px;width:687px;height:1px;background:#cacaca"></div>
<div class="a" style="left:120px;top:483px;width:1px;height:23px;background:#cacaca"></div>
<div class="a" style="left:218px;top:483px;width:1px;height:23px;background:#cacaca"></div>
<div class="a" style="left:316px;top:483px;width:1px;height:23px;background:#cacaca"></div>
<div class="a" style="left:414px;top:483px;width:1px;height:23px;background:#cacaca"></div>
<div class="a" style="left:512px;top:483px;width:1px;height:23px;background:#cacaca"></div>
<div class="a" style="left:610px;top:483px;width:1px;height:23px;background:#cacaca"></div>
<div class="t" style="left:27px;top:489px;font-size:11px;line-height:11px;color:#1e1e1e">001bdef6-7bbc-...</div>
<div class="t" style="left:125px;top:489px;font-size:11px;line-height:11px;color:#1e1e1e">48400</div>
<div class="t" style="left:223px;top:489px;font-size:11px;line-height:11px;color:#1e1e1e">2000/09/21</div>
<div class="t" style="left:321px;top:489px;font-size:11px;line-height:11px;color:#1e1e1e">24400</div>
<div class="t" style="left:419px;top:489px;font-size:11px;line-height:11px;color:#1e1e1e">2001/08/12</div>
<div class="t" style="left:517px;top:489px;font-size:11px;line-height:11px;color:#1e1e1e">Stoping</div>
<div class="a" style="left:0px;top:506px;width:22px;height:23px;background:#fff"></div>
<div class="a" style="left:22px;top:506px;width:687px;height:22px;background:#f0f0f0"></div>
<div class="a" style="left:22px;top:528px;width:687px;height:1px;background:#cacaca"></div>
<div class="a" style="left:120px;top:506px;width:1px;height:23px;background:#cacaca"></div>
<div class="a" style="left:218px;top:506px;width:1px;height:23px;background:#cacaca"></div>
<div class="a" style="left:316px;top:506px;width:1px;height:23px;background:#cacaca"></div>
<div class="a" style="left:414px;top:506px;width:1px;height:23px;background:#cacaca"></div>
<div class="a" style="left:512px;top:506px;width:1px;height:23px;background:#cacaca"></div>
<div class="a" style="left:610px;top:506px;width:1px;height:23px;background:#cacaca"></div>
<div class="t" style="left:27px;top:512px;font-size:11px;line-height:11px;color:#1e1e1e">001c2f1a-8d3e-...</div>
<div class="t" style="left:125px;top:512px;font-size:11px;line-height:11px;color:#1e1e1e">55400</div>
<div class="t" style="left:223px;top:512px;font-size:11px;line-height:11px;color:#1e1e1e">2003/04/15</div>
<div class="t" style="left:321px;top:512px;font-size:11px;line-height:11px;color:#1e1e1e">41400</div>
<div class="t" style="left:419px;top:512px;font-size:11px;line-height:11px;color:#1e1e1e">2003/04/22</div>
<div class="t" style="left:517px;top:512px;font-size:11px;line-height:11px;color:#1e1e1e">Stoping</div>
<div class="a" style="left:22px;top:0;width:1px;height:514px;background:#cacaca"></div>
</div>
<div class="a" style="left:28px;top:266px;width:97px;height:22px;background:#fff;"></div>
<div class="a" style="left:27px;top:266px;width:99px;height:22px;box-sizing:border-box;border:1px dotted #000;"></div>
<div class="t" style="left:32px;top:272px;color:#1e1e1e;font-size:11px;line-height:11px;font-weight:normal;">00001154-e176-...</div>
<div class="a" style="left:5px;top:779px;width:726px;height:1px;background:#cacaca;"></div>
<div class="a" style="left:715px;top:242px;width:16px;height:537px;background:#f0f0f0;"></div>
<div class="a" style="left:715px;top:243px;width:15px;height:16px;background:#fff;box-sizing:border-box;border:1px solid #a6a6a6;"></div>
<div class="a" style="left:715px;top:259px;width:15px;height:17px;background:#fff;box-sizing:border-box;border:1px solid #a6a6a6;"></div>
<div class="a" style="left:715px;top:762px;width:15px;height:16px;background:#fff;box-sizing:border-box;border:1px solid #a6a6a6;"></div>
<div class="a" style="left:5px;top:780px;width:726px;height:36px;background:#f0f0f0;"></div>
<div class="a" style="left:29px;top:786px;width:96px;height:24px;background:#fff;box-sizing:border-box;border:1px solid #bdbdbd;"></div>
<div class="t" style="left:-278px;width:400px;text-align:right;top:793px;color:#1e1e1e;font-size:11px;line-height:11px;font-weight:normal;">56061</div>
<div class="a" style="left:737px;top:161px;width:1px;height:657px;background:#a0a0a0;"></div>
<div class="a" style="left:737px;top:161px;width:786px;height:1px;background:#c8c8c8;"></div>
<div class="a" style="left:1522px;top:161px;width:1px;height:657px;background:#c8c8c8;"></div>
<div class="a" style="left:738px;top:162px;width:784px;height:23px;background:#dcdcdc;"></div>
<div class="t" style="left:744px;top:168px;color:#1a1a1a;font-size:11px;line-height:11px;font-weight:bold;letter-spacing:0.3px">Plan View</div>
<div class="a" style="left:738px;top:185px;width:784px;height:50px;background:#4c6a9a;"></div>
<div class="t" style="left:806px;top:193px;color:#fff;font-size:11px;line-height:11px;font-weight:normal;">Data</div>
<div class="t" style="left:855px;top:193px;color:#fff;font-size:11px;line-height:11px;font-weight:normal;">View</div>
<div class="t" style="left:903px;top:193px;color:#fff;font-size:11px;line-height:11px;font-weight:normal;">Draw</div>
<div class="t" style="left:954px;top:193px;color:#fff;font-size:11px;line-height:11px;font-weight:normal;">Edit</div>
<div class="t" style="left:998px;top:193px;color:#fff;font-size:11px;line-height:11px;font-weight:normal;">Selection</div>
<div class="t" style="left:1067px;top:193px;color:#fff;font-size:11px;line-height:11px;font-weight:normal;">Tools</div>
<div class="t" style="left:1118px;top:193px;color:#fff;font-size:11px;line-height:11px;font-weight:normal;">Utilities</div>
<div class="a" style="left:1170px;top:188px;width:150px;height:20px;background:#fff;box-sizing:border-box;border:1px solid #c4c8d0;"></div>
<div class="t" style="left:1188px;top:193px;color:#1e1e1e;font-size:11px;line-height:11px;font-weight:normal;">Search</div>
<div class="a" style="left:930px;top:211px;width:24px;height:24px;background:#fff;"></div>
<div class="t" style="left:1154px;top:218px;color:#fff;font-size:11px;line-height:11px;font-weight:normal;">0 selected</div>
<div class="a" style="left:738px;top:235px;width:567px;height:26px;background:#f0f0f0;"></div>
<div class="a" style="left:740px;top:237px;width:70px;height:24px;background:#f0f0f0;"></div>
<div class="a" style="left:740px;top:237px;width:70px;height:1px;background:#c8c8c8;"></div>
<div class="a" style="left:740px;top:237px;width:1px;height:24px;background:#c8c8c8;"></div>
<div class="a" style="left:809px;top:237px;width:1px;height:24px;background:#c8c8c8;"></div>
<div class="t" style="left:747px;top:244px;color:#1a1a1a;font-size:11px;line-height:11px;font-weight:bold;letter-spacing:0.3px">Main View</div>
<div class="a" style="left:741px;top:261px;width:563px;height:29px;background:#f0f0f0;"></div>
<div class="a" style="left:741px;top:261px;width:563px;height:1px;background:#7c7c7c;"></div>
<div class="a" style="left:741px;top:262px;width:563px;height:1px;background:#8a8a8a;"></div>
<div class="a" style="left:741px;top:261px;width:1px;height:29px;background:#7c7c7c;"></div>
<div class="a" style="left:742px;top:263px;width:1px;height:24px;background:#909090;"></div>
<div class="a" style="left:741px;top:287px;width:563px;height:1px;background:#9a9a9a;"></div>
<div class="a" style="left:741px;top:288px;width:563px;height:1px;background:#9a9a9a;"></div>
<div class="a" style="left:741px;top:289px;width:563px;height:1px;background:#b0b0b0;"></div>
<div class="a" style="left:979px;top:265px;width:32px;height:20px;background:#fff;box-sizing:border-box;border:1px solid #adadad;"></div>
<div class="a" style="left:1041px;top:263px;width:16px;height:24px;background:#cad9f2;"></div>
<div class="a" style="left:1041px;top:263px;width:1px;height:24px;background:#b8c8e8;"></div>
<div class="a" style="left:1056px;top:263px;width:1px;height:24px;background:#b8c8e8;"></div>
<div class="t" style="left:1045px;top:268px;color:#666;font-size:11px;line-height:11px;font-weight:normal;">*</div>
<div class="a" style="left:743px;top:290px;width:548px;height:481px;background:#fff;"></div>
<div class="a" style="left:740px;top:290px;width:1px;height:498px;background:#c8c8c8;"></div>
<div class="a" style="left:1291px;top:292px;width:13px;height:479px;background:#f0f0f0;"></div>
<div class="a" style="left:1291px;top:709px;width:14px;height:45px;background:#cdcdcd;"></div>
<div class="a" style="left:741px;top:771px;width:564px;height:16px;background:#f0f0f0;"></div>
<div class="a" style="left:1236px;top:771px;width:53px;height:15px;background:#cdcdcd;"></div>
<div class="a" style="left:1305px;top:261px;width:1px;height:527px;background:#c4c4c4;"></div>
<div class="a" style="left:740px;top:787px;width:566px;height:1px;background:#c8c8c8;"></div>
<div class="t" style="left:787px;top:690px;color:#6f8a20;font-size:11px;line-height:11px;font-weight:normal;">y</div>
<div class="a" style="left:789px;top:706px;width:1px;height:20px;background:#a4bca4;"></div>
<div class="a" style="left:789px;top:725px;width:20px;height:1px;background:#ff8080;"></div>
<div class="t" style="left:817px;top:720px;color:#ff0000;font-size:11px;line-height:11px;font-weight:normal;">x</div>
<div class="t" style="left:791px;top:727px;color:#0000ff;font-size:11px;line-height:11px;font-weight:normal;">z</div>
<div class="a" style="left:1155px;top:739px;width:132px;height:23px;background:#fff;box-sizing:border-box;border:2px solid #000;"></div>
<div class="t" style="left:1161px;top:746px;color:#1e1e1e;font-size:11px;line-height:11px;font-weight:normal;">2km</div>
<div class="a" style="left:1193px;top:749px;width:81px;height:3px;background:#000;"></div>
<div class="a" style="left:1192px;top:746px;width:3px;height:8px;background:#000;"></div>
<div class="a" style="left:1271px;top:746px;width:3px;height:8px;background:#000;"></div>
<div class="a" style="left:1311px;top:237px;width:1px;height:551px;background:#a0a0a0;"></div>
<div class="a" style="left:1312px;top:290px;width:1px;height:22px;background:#c0c0c0;"></div>
<div class="a" style="left:1519px;top:237px;width:1px;height:551px;background:#a8a8a8;"></div>
<div class="a" style="left:1311px;top:237px;width:209px;height:1px;background:#c8c8c8;"></div>
<div class="a" style="left:1312px;top:238px;width:207px;height:29px;background:#dcdcdc;"></div>
<div class="a" style="left:1312px;top:267px;width:207px;height:1px;background:#a0a0a0;"></div>
<div class="t" style="left:1317px;top:247px;color:#1a1a1a;font-size:11px;line-height:11px;font-weight:bold;letter-spacing:0.4px">Layers</div>
<div class="a" style="left:1312px;top:268px;width:207px;height:22px;background:#f0f0f0;"></div>
<div class="t" style="left:1316px;top:274px;color:#6d7079;font-size:11px;line-height:11px;font-weight:normal;">Description</div>
<div class="a" style="left:1312px;top:290px;width:207px;height:497px;background:#fff;"></div>
<div class="a" style="left:1311px;top:787px;width:209px;height:1px;background:#a0a0a0;"></div>
<div class="a" style="left:738px;top:790px;width:785px;height:1px;background:#c8c8c8;"></div>
<div class="a" style="left:738px;top:791px;width:785px;height:26px;background:#dcdcdc;"></div>
<div class="a" style="left:738px;top:817px;width:785px;height:1px;background:#c8c8c8;"></div>
<div class="a" style="left:1522px;top:790px;width:1px;height:28px;background:#c8c8c8;"></div>
<div class="a" style="left:1px;top:820px;width:1524px;height:1px;background:#c8c8c8;"></div>
<div class="a" style="left:1px;top:821px;width:1524px;height:21px;background:#dcdcdc;"></div>
<div class="a" style="left:1518px;top:829px;width:2px;height:2px;background:#9a9a9a;"></div>
<div class="a" style="left:1514px;top:833px;width:2px;height:2px;background:#9a9a9a;"></div>
<div class="a" style="left:1518px;top:833px;width:2px;height:2px;background:#9a9a9a;"></div>
<div class="a" style="left:1510px;top:837px;width:2px;height:2px;background:#9a9a9a;"></div>
<div class="a" style="left:1514px;top:837px;width:2px;height:2px;background:#9a9a9a;"></div>
<div class="a" style="left:1518px;top:837px;width:2px;height:2px;background:#9a9a9a;"></div>
<div class="a" style="left:806px;top:794px;width:80px;height:20px;background:#fff;box-sizing:border-box;border:1px solid #adadad;"></div>
<div class="t" style="left:811px;top:799px;color:#1e1e1e;font-size:11px;line-height:11px;font-weight:normal;">97 056</div>
<div class="t" style="left:915px;top:799px;color:#1e1e1e;font-size:11px;line-height:11px;font-weight:normal;letter-spacing:0.055px">42 953.236; -2 913 564.068; -768.000</div>
<div class="t" style="left:1203px;top:799px;color:#1e1e1e;font-size:11px;line-height:11px;font-weight:normal;letter-spacing:0.22px">-90.00, 0.00, 0.00</div>
<svg class="a" style="left:0;top:0" width="1526" height="843" viewBox="0 0 1526 843"><path d="M13 10H21.5L25.5 14V25H13Z" fill="#fff"/><path d="M14.6 11.6H21L23.9 14.5V23.4H14.6Z" fill="#fff" stroke="#333" stroke-width="1.3"/><path d="M20.8 11.5V14.7H24Z" fill="#333"/><circle cx="16.3" cy="14.6" r=".85" fill="#333"/><circle cx="18.7" cy="14.6" r=".85" fill="#333"/><circle cx="21.5" cy="17.6" r=".85" fill="#333"/><circle cx="21.5" cy="20.6" r=".85" fill="#333"/><path d="M17.2 16.6l.7 1.5 1.6.1-1.2 1 .4 1.6-1.5-.9-1.4.9.4-1.6-1.2-1 1.6-.1z" fill="#333"/><path d="M38 16H45L41.5 19.5Z" fill="#fff"/><circle cx="1322" cy="17" r="7" fill="#3b9a50"/><text x="1322" y="21.5" font-family="Liberation Sans" font-weight="bold" font-size="12" text-anchor="middle" fill="#2b6e3a">?</text><path d="M1352.6 12.6h10v9.3h-10z" fill="none" stroke="#fff" stroke-width="1.2"/><path d="M1352.6 14.8h10" stroke="#fff" stroke-width="1.2"/><path d="M1357.6 21.5v-4.8M1355.4 18.8l2.2-2.2 2.2 2.2" fill="none" stroke="#fff" stroke-width="1.2"/><path d="M1401 17.5h10.5" stroke="#fff" stroke-width="1.1"/><path d="M1449.5 12.5h9.5v9.5h-9.5z" fill="none" stroke="#fff" stroke-width="1.1"/><path d="M1497 12l10 10M1507 12l-10 10" stroke="#fff" stroke-width="1.1"/><path d="M13.5 40.5h12v13h-12z" fill="#fff" stroke="#7a7a7a"/><path d="M16.5 40.5v13" stroke="#7a7a7a"/><path d="M18.2 42.5h5.8M18.2 44.5h5.8M18.2 46.5h5.8M18.2 48.5h5.8M18.2 50.5h5.8" stroke="#5e5e5e"/><path d="M28 46.5h4.5l-2.25 2.2z" fill="#b8c0cc"/><rect x="27.5" y="69.5" width="21" height="20" fill="#f2f5fb" stroke="#6f87b8"/><rect x="28" y="70" width="20" height="5" fill="#7fb0e2"/><path d="M27.5 75h21" stroke="#6f87b8"/><path d="M34.5 69.5v20M41.5 69.5v20M27.5 79.5h21M27.5 84.5h21" stroke="#a9b9da"/><rect x="34.5" y="79.5" width="21" height="20" fill="#f2f5fb" stroke="#6f87b8"/><path d="M41.5 79.5v20M48.5 79.5v20M34.5 84.5h21M34.5 89.5h21M34.5 94.5h21" stroke="#a9b9da"/><path d="M31 81.3c.6 4.5 3.8 6.5 7.6 6.6v4.3l8.6-5.7-8.6-5.6v3.5c-3.3 0-5.3-1-7.6-3.1z" fill="#8cc63f" stroke="#4f8a1e" stroke-width=".9" stroke-linejoin="round"/><path d="M34 85c1.5 1 3 1.3 5 1.3" stroke="#c8e89a" stroke-width="1" fill="none"/><defs><linearGradient id="exg" x1="0" y1="0" x2="0" y2="1"><stop offset="0" stop-color="#ffffff"/><stop offset="1" stop-color="#e2e8f4"/></linearGradient></defs><rect x="99.6" y="72.6" width="27.8" height="24" rx="1.5" fill="url(#exg)" stroke="#7f92bf" stroke-width="1.2"/><path d="M106.6 72.6v24M113.6 72.6v24M120.6 72.6v24" stroke="#7f92bf" stroke-width="1.2"/><rect x="149.6" y="69.6" width="22.8" height="29" rx="1" fill="url(#exg)" stroke="#8898c2" stroke-width="1.2"/><rect x="151" y="71" width="20" height="4.5" fill="#aab6d6"/><rect x="151" y="92" width="20" height="5" fill="#98a7cc"/><rect x="254" y="93" width="46" height="14" rx="7" fill="#4a6899"/><circle cx="293" cy="100" r="4.2" fill="#fff"/><path d="M1512 148l4-4 4 4" fill="none" stroke="#555" stroke-width="1.4"/><path d="M723 171h6.5l-3.25 3.5z" fill="#555"/><circle cx="721.5" cy="199.5" r="4.8" fill="none" stroke="#222" stroke-width="1.5"/><path d="M718 203L713 208" stroke="#222" stroke-width="2.2"/><path d="M11 249h10l-3.7 3.9v4h-2.6v-4z" fill="#666"/><path d="M14 273.2v7.8l4.2-3.9z" fill="#666"/><path d="M718.5 253.5h8l-4-4.5z" fill="#666"/><path d="M718.5 767h8l-4 4.5z" fill="#666"/><path d="M1508 169.5h5.5M1508.5 169.5v5M1512.5 169.5v5M1507 174.5h7M1510.5 174.5v3.8" stroke="#555" stroke-width="1" fill="none"/><defs><linearGradient id="afg" x1="0" y1="0" x2="0" y2="1"><stop offset="0" stop-color="#dcf090"/><stop offset=".45" stop-color="#b8dc60"/><stop offset="1" stop-color="#a6d04a"/></linearGradient></defs><path d="M763 190.3C765 190 766 191.6 768 191.9 770 192 771.2 194 772 196 773.5 197 774.4 198 773.9 199.6 772.6 201 772 203 771.5 204.5 770.5 206 769 207.2 767.5 207 766.5 206 766 204 765.5 202 765 200.6 764 200 762 199.6 760 199.5 758.4 198 758.3 196 758.3 193.5 760.5 191 763 190.3Z" fill="url(#afg)" stroke="#7a9a2a" stroke-width=".7"/><text x="761.8" y="198" font-family="Liberation Sans" font-weight="bold" font-size="6.3" fill="#1a3a80">AB</text><circle cx="1179.3" cy="197" r="3.5" fill="none" stroke="#555" stroke-width="1.1"/><path d="M1176.8 199.6l-2.8 2.8" stroke="#555" stroke-width="1.4"/><circle cx="1509" cy="198" r="7.2" fill="#fff"/><text x="1509" y="202.6" font-family="Liberation Sans" font-weight="bold" font-size="12" text-anchor="middle" fill="#4a6899">?</text><path d="M743 217h5l1.2 1.5h5.3v2.2h3.5l-1.5 9.3H743z" fill="#fff"/><path d="M767.5 215.5h8.5l2.5 2.5v12.5h-11z" fill="#ffffff" fill-opacity=".25" stroke="#e8ecf4" stroke-width="1"/><path d="M767.5 215v16" stroke="#fff" stroke-width="1.3"/><path d="M768.5 216.2h6.5v1.8h-6.5z" fill="#9ec3ea"/><rect x="768.2" y="219.2" width="3.6" height="3.8" fill="#e8584e"/><rect x="773" y="219.2" width="3.6" height="3.8" fill="#f59a3a"/><rect x="768.2" y="224.6" width="3.6" height="3.6" fill="#fcd050"/><rect x="773" y="224.6" width="3.6" height="3.6" fill="#70c860"/><path d="M768.5 223.8h8.5M768.5 229.3h8.5" stroke="#c8d0dc" stroke-width=".7"/><path d="M780.3 217v13.5" stroke="#dfe6f2" stroke-width="2.8"/><path d="M780.3 219v9.5" stroke="#2f78e0" stroke-width="1.6"/><path d="M780.3 229v1.5" stroke="#f8c8a0" stroke-width="1.6"/><path d="M798 216.3c-3.7 0-6.8 3-6.8 6.8 0 3.4 2.8 6 5.8 6 1.4 0 1.8-.9 1.3-1.9-.5-1 0-2 1.2-2h1.6c1.6 0 2.6-1.3 2.6-3.1 0-3.3-2.4-5.8-5.7-5.8z" fill="none" stroke="#e4e8f0" stroke-width="1" stroke-dasharray="1.4 .6"/><circle cx="794.5" cy="221.5" r=".9" fill="#e4e8f0"/><circle cx="793.8" cy="225" r=".9" fill="#e4e8f0"/><circle cx="797.5" cy="219.3" r=".9" fill="none" stroke="#e4e8f0" stroke-width=".6"/><circle cx="795.6" cy="227.3" r=".8" fill="#e4e8f0"/><path d="M804.5 222.5v8" stroke="#fff" stroke-width="1.4"/><path d="M804.5 216c1 1.3 1.6 2.6 1.6 3.8 0 1.1-.7 1.9-1.6 1.9s-1.6-.8-1.6-1.9c0-1.2.6-2.5 1.6-3.8z" fill="#fff"/><path d="M815 224.3l7.5-2.6 7.5 2.6-7.5 2.2z" fill="#fff"/><path d="M815 227l7.5 2.4 7.5-2.4" fill="none" stroke="#fff" stroke-width="1.4"/><path d="M815 229.5l7.5 2 7.5-2" fill="none" stroke="#fff" stroke-width="1.4"/><path d="M838 217h8.5l-8.5 8.5z" fill="#34a853"/><path d="M838 225.5l8.5-8.5 4.5 4.5-8.7 8.7H838z" fill="#fbbc04"/><path d="M838 230.5v-1.6l7-7 8 8.6z" fill="#4285f4"/><path d="M846 221.3l6 -1v10.2z" fill="#e0e0e0"/><path d="M850.5 214.7c2.4 0 4.1 1.9 4.1 4 0 2.6-2.6 4.8-4.1 7.6-1.5-2.8-4.1-5-4.1-7.6 0-2.1 1.7-4 4.1-4z" fill="#ea4335"/><circle cx="850.5" cy="218.6" r="1.5" fill="#7a2218"/><rect x="862.8" y="215.8" width="14.8" height="14.8" fill="none" stroke="#f7a021" stroke-width="1.5"/><path d="M865.8 218.5v7.5" stroke="#fbbc48" stroke-width="1.5"/><ellipse cx="869.5" cy="224.6" rx="3.8" ry="2.4" fill="none" stroke="#fbbc48" stroke-width="1.5"/><path d="M868 224.6h3" stroke="#fbbc48" stroke-width="1.5"/><path d="M887.5 215.5v14h14" fill="none" stroke="#f0f0f0" stroke-width="1"/><path d="M885.8 217.5l1.7-2.5 1.7 2.5zM899.5 227.8l2.5 1.7-2.5 1.7z" fill="#f0f0f0"/><path d="M890.5 218.5l8.5 9h-8.5z" fill="none" stroke="#e8ecf4" stroke-width="1"/><path d="M891.5 224h2v2.5h-2z" fill="#e8ecf4"/><path d="M913.5 225.5v-7c0-.8.5-1.5 1-2M913.5 225.5l6-4M913.5 225.5l5 5" fill="none" stroke="#e8ecf4" stroke-width="1"/><circle cx="913.8" cy="225.6" r="1.7" fill="#fff"/><text x="915" y="219" font-family="Liberation Sans" font-size="5" fill="#e8ecf4">Z</text><text x="920" y="222.5" font-family="Liberation Sans" font-size="5" fill="#e8ecf4">Y</text><text x="920.5" y="231.5" font-family="Liberation Sans" font-size="5" fill="#e8ecf4">X</text><path d="M938 215.5c-2.8 1.6-4 4-4 6.3 0 2.6 1.4 5 4 6.3" fill="none" stroke="#9a5a5a" stroke-width="1" stroke-dasharray="1.2 .8"/><circle cx="942.8" cy="221.4" r="5.6" fill="#1d5f70" stroke="#6a2a2a" stroke-width=".9"/><path d="M939 218.5l2.2-1.5 1.8 1.2-1.3 2.3-2.2-.2zM943.5 220l2 1-1 2.3-2.2-.6zM938 222.5l2 .5.3 2.2-1.8.3zM941 224.5l2.3.3-.6 2-1.6-.4z" fill="#4ec8e4"/><path d="M945 217l2.5 1.8.3 2.5-2.2-.8zM946.5 222l1.5.2-.5 2.5-1.3-.8z" fill="#b4f2de"/><path d="M941 228v1.6M944.5 228v1.6" stroke="#8a5050" stroke-width=".8"/><path d="M939 230.6h7.6" stroke="#b0401a" stroke-width="1.5"/><path d="M966 215c-2.6 0-4.5 2-4.5 4.4 0 2.8 2.9 5.5 4.5 8.3 1.6-2.8 4.5-5.5 4.5-8.3 0-2.4-1.9-4.4-4.5-4.4z" fill="#fff"/><circle cx="966" cy="219.4" r="2.2" fill="#4a6899"/><path d="M985 218h12v11l-1.5 1.5H985z" fill="#dedede"/><rect x="982" y="215" width="16" height="2.5" fill="#f8c63c"/><rect x="982" y="215" width="2.5" height="16" fill="#f8c63c"/><rect x="982" y="215" width="1.5" height="1.5" fill="#e03030"/><rect x="985" y="218.5" width="7" height="6.5" fill="#4a6899"/><circle cx="1009" cy="218" r="1.9" fill="#111"/><path d="M1013 222l6 1.7-2.3 1.2 3.5 3.5-1.3 1.3-3.5-3.5-1.2 2.3z" fill="#111"/><path d="M1030.7 217.5h5M1033.2 215.0v5" stroke="#111" stroke-width="1.2"/><path d="M1034.5 219.5h6v6h-6z" fill="none" stroke="#111" stroke-width="1"/><path d="M1040.8 225.8l4.6 1.3-1.7 1 2.6 2.6-1 1-2.6-2.6-1 1.7z" fill="#111"/><path d="M1054.9 217.5h5M1057.4 215.0v5" stroke="#111" stroke-width="1.2"/><circle cx="1061.2" cy="222.2" r="3.6" fill="none" stroke="#111" stroke-width="1"/><path d="M1064.8 225.8l4.6 1.3-1.7 1 2.6 2.6-1 1-2.6-2.6-1 1.7z" fill="#111"/><path d="M1078.7 217.5h5M1081.2 215.0v5" stroke="#111" stroke-width="1.2"/><path d="M1080.8 222.5l3.2-2.6c1.5-.6 3.5-.2 5 1.2l-3.9 5.4z" fill="none" stroke="#111" stroke-width="1"/><path d="M1088.8 225.8l4.6 1.3-1.7 1 2.6 2.6-1 1-2.6-2.6-1 1.7z" fill="#111"/><path d="M1103 217.5h5" stroke="#111" stroke-width="1.2"/><path d="M1106.5 219.5h6v6h-6z" fill="none" stroke="#111" stroke-width="1"/><path d="M1112.8 225.8l4.6 1.3-1.7 1 2.6 2.6-1 1-2.6-2.6-1 1.7z" fill="#111"/><path d="M1126.5 215.5h16M1126.5 215.5v16" stroke="#fff" stroke-width="1" stroke-dasharray="1.5 1.8"/><path d="M1130 219l9 9M1139 219l-9 9" stroke="#fff" stroke-width="1.8"/><path d="M1218.5 215.5h9v9h-9z" fill="none" stroke="#b9c5da" stroke-width="1"/><path d="M1212.5 220.5h8v7h-8z" fill="none" stroke="#b9c5da" stroke-width="1"/><path d="M1220.5 222v8l1.8-1.8 1.5 2.5 1-.6-1.4-2.4h2.5z" fill="#4a6899" stroke="#b9c5da" stroke-width=".8"/><path d="M1236.5 216.5h15v14h-15z" fill="none" stroke="#fff" stroke-width="1.2"/><path d="M1236 216.5h16" stroke="#fff" stroke-width="2"/><path d="M1236.5 223.5h15M1236.5 226.5h15M1239.5 216.5v14" stroke="#fff" stroke-width="1"/><path d="M1241 221h10M1241 224.5h10M1241 228.5h10" stroke="#fff" stroke-width=".8" stroke-dasharray="1 1.2"/><path d="M1267.5 222h7l-3.5 3.5z" fill="#fff"/><path d="M1296 247.5h6.5l-3.25 3.2z" fill="#555"/><path d="M751.5 270.5l8.7 3-3.4 1.4 4.2 4.2-1.5 1.5-4.2-4.2-1.4 3.4z" fill="#111"/><circle cx="780" cy="272.8" r="4.8" fill="#fff" stroke="#111" stroke-width="1.5"/><path d="M777.6 272.8h4.8M780 270.4v4.8" stroke="#333" stroke-width="1"/><path d="M784 276.8l4.2 4.2" stroke="#111" stroke-width="2.6" stroke-linecap="round"/><circle cx="806" cy="272.8" r="4.8" fill="#fff" stroke="#111" stroke-width="1.5"/><path d="M804.6 272.9h2.8" stroke="#333" stroke-width="1.1"/><path d="M810 276.8l4.2 4.2" stroke="#111" stroke-width="2.6" stroke-linecap="round"/><circle cx="834" cy="274.8" r="7.5" fill="#f8f8f2" stroke="#4040ff" stroke-width=".9"/><path d="M827.05 271.60 L828.45 269.80 L830.45 268.40 L832.85 269.10 L832.55 270.30 L830.95 271.30 L829.15 272.40 L828.35 272.60Z M829.95 274.20 L831.45 274.50 L832.55 275.00 L832.85 276.30 L832.15 278.00 L831.55 279.40 L830.95 277.80 L830.35 276.30Z M833.85 270.30 L835.15 269.20 L837.55 268.40 L839.15 269.20 L840.15 270.50 L840.95 273.10 L839.05 273.90 L837.85 274.20 L837.35 276.30 L836.25 278.40 L835.35 276.80 L834.95 275.20 L834.15 272.40Z" fill="#0000ff"/><circle cx="839.35" cy="278.4" r="1.3" fill="#0000ff"/><path d="M830.95 267.5h5.5" stroke="#3030ff" stroke-width="1.2"/><circle cx="860" cy="274.8" r="7.5" fill="#f8f8f2" stroke="#4040ff" stroke-width=".9"/><path d="M853.05 271.60 L854.45 269.80 L856.45 268.40 L858.85 269.10 L858.55 270.30 L856.95 271.30 L855.15 272.40 L854.35 272.60Z M855.95 274.20 L857.45 274.50 L858.55 275.00 L858.85 276.30 L858.15 278.00 L857.55 279.40 L856.95 277.80 L856.35 276.30Z M859.85 270.30 L861.15 269.20 L863.55 268.40 L865.15 269.20 L866.15 270.50 L866.95 273.10 L865.05 273.90 L863.85 274.20 L863.35 276.30 L862.25 278.40 L861.35 276.80 L860.95 275.20 L860.15 272.40Z" fill="#0000ff"/><circle cx="865.35" cy="278.4" r="1.3" fill="#0000ff"/><path d="M856.95 267.5h5.5" stroke="#3030ff" stroke-width="1.2"/><path d="M852.5 270v-2.5h2.5M865 267.5h2.5v2.5M867.5 280v2.5H865M855 282.5h-2.5V280" fill="none" stroke="#1010ff" stroke-width="1.2"/><path d="M891.20 272.68L893.27 273.14L893.27 276.86L891.20 277.32L891.32 277.04L892.45 278.83L889.83 281.45L888.04 280.32L888.32 280.20L887.86 282.27L884.14 282.27L883.68 280.20L883.96 280.32L882.17 281.45L879.55 278.83L880.68 277.04L880.80 277.32L878.73 276.86L878.73 273.14L880.80 272.68L880.68 272.96L879.55 271.17L882.17 268.55L883.96 269.68L883.68 269.80L884.14 267.73L887.86 267.73L888.32 269.80L888.04 269.68L889.83 268.55L892.45 271.17L891.32 272.96Z" fill="#fff000" stroke="#111" stroke-width="1.1" stroke-linejoin="round"/><circle cx="886" cy="275" r="2.6" fill="#f0f0f0" stroke="#111" stroke-width="1.2"/><path d="M908.5 268.5H912.3L909.4 274.8 912.3 281.1H908.5L905.5 274.8ZM915.2 268.5H919L916.1 274.8 919 281.1H915.2L912.2 274.8Z" fill="#00f000" stroke="#000" stroke-width="1" stroke-linejoin="miter"/><path d="M930.5 268.5H934.3L937.5 274.8 934.3 281.1H930.5L933.5 274.8ZM937.2 268.5H941L944.2 274.8 941 281.1H937.2L940.2 274.8Z" fill="#c0c0c0" stroke="#9a9a9a" stroke-width="1"/><rect x="955" y="268" width="13" height="13" fill="#222"/><rect x="956" y="269" width="2" height="2" fill="#fff"/><rect x="956" y="272" width="2" height="2" fill="#fff"/><rect x="956" y="275" width="2" height="2" fill="#fff"/><rect x="956" y="278" width="2" height="2" fill="#fff"/><rect x="959" y="269" width="2" height="2" fill="#fff"/><rect x="959" y="272" width="2" height="2" fill="#fff"/><rect x="959" y="275" width="2" height="2" fill="#fff"/><rect x="959" y="278" width="2" height="2" fill="#fff"/><rect x="962" y="269" width="2" height="2" fill="#fff"/><rect x="962" y="272" width="2" height="2" fill="#fff"/><rect x="962" y="275" width="2" height="2" fill="#fff"/><rect x="962" y="278" width="2" height="2" fill="#fff"/><rect x="965" y="269" width="2" height="2" fill="#fff"/><rect x="965" y="272" width="2" height="2" fill="#fff"/><rect x="965" y="275" width="2" height="2" fill="#fff"/><rect x="965" y="278" width="2" height="2" fill="#fff"/><path d="M985 269l4.5-.5 4.5.3 3.2 3.6.3 4.6-3.2 2.2-2.8 2.8-4.6-.2-2.8-4-1-5z" fill="#000"/><path d="M985.2 271.4l3-1.6 1.8 0v3.2l-3 .6z" fill="#f020e8"/><path d="M990.6 269.8h2.3l2.3 2.5-4.6 1.6z" fill="#ff1050"/><path d="M984.2 273.5l4.8.4-1.5 4.2-2.4-1.2z" fill="#4030e0"/><path d="M991.6 275l4-1.3.2 3.4-2.8 1.6z" fill="#ffee00"/><path d="M990.2 275l2.5 2.8-2.2 2.4-3 .2-.8-2.8z" fill="#00ff20"/><path d="M1000.5 274.5h5.5l-2.75 3z" fill="#666"/><defs><linearGradient id="rbg" x1="0" y1="0" x2="0" y2="1"><stop offset="0" stop-color="#8fd8aa"/><stop offset=".55" stop-color="#14894a"/><stop offset="1" stop-color="#3aa868"/></linearGradient></defs><path d="M1029 267.6c2-.5 4 .5 4 2.5v5.2c-1-.7-2.2-.8-3.2-.2z" fill="#2a9a5a"/><path d="M1023.2 268.2H1030V283L1026.6 278.6 1023.2 283Z" fill="url(#rbg)"/><path d="M1048.5 269.2v5.2M1046.3 270.6l4.4 2.6M1046.3 273.2l4.4-2.6" stroke="#9090a8" stroke-width=".65"/><path d="M1293.2 303.4l3.6-3.8 3.6 3.8" fill="none" stroke="#444" stroke-width="1.8"/><path d="M1293.5 760l3.5 3.5 3.5-3.5" fill="none" stroke="#444" stroke-width="1.8"/><path d="M751.5 774.5l-3.5 3.5 3.5 3.5" fill="none" stroke="#444" stroke-width="1.8"/><path d="M1295.5 774.5l3.5 3.5-3.5 3.5" fill="none" stroke="#444" stroke-width="1.8"/><path d="M1440.5 246.2l-8.3 5.1 8.3 5.5" fill="none" stroke="#c6c6c6" stroke-width="1"/><path d="M1446 246l-8.5 5.3 8.5 5.6z" fill="#c4c4c4"/><path d="M1463 246.2l8.5 5.1-8.5 5.5" fill="none" stroke="#c6c6c6" stroke-width="1"/><path d="M1458 246l8.3 5.3-8.3 5.6z" fill="#c4c4c4"/><path d="M1485.5 248.5h5M1486.5 248.5v5M1489.5 248.5v5M1484 253.5h7.5M1487.75 253.5v4" stroke="#555" stroke-width="1" fill="none"/><path d="M1504 248l8 8M1512 248l-8 8" stroke="#555" stroke-width="1"/><path d="M747.5 796H754.5L757.6 799V802.2L755 806V807.5H747V806L744.4 802.2V799Z" fill="#f2aa56" stroke="#b47838" stroke-width=".9"/><path d="M748 797.3H754L756.4 799.6V801.8L754 805.4H748L745.6 801.8V799.6Z" fill="none" stroke="#fbd9a8" stroke-width=".8"/><path d="M748.6 800.4L750.3 802H751.9L753.6 800.4M751.1 802V806.6" fill="none" stroke="#eeee20" stroke-width="1.4"/><rect x="748" y="807.5" width="6.5" height="4" fill="#454545"/><path d="M748.5 809.2h5.5M748.5 810.8h5.5" stroke="#8a8a8a" stroke-width=".6"/><circle cx="785" cy="803.8" r="7.6" fill="#3a302a"/><path d="M778.5 800.5c2 .8 4 .5 6-.8M779.5 805c3 1.5 6 .8 8.5-1.5M781 808.5c2.5 1 5.5.6 7.5-1.2M783.5 797c.3 2 1 3.5 2.5 5M788 797.5c-.5 1.7-.2 3.5 1 5M778.5 803.5c1 2 2 3.5 3.5 4.5M790.5 801.5c.5 2 .5 4-.5 6M786 803c1 .8 2 1 3.5.5" stroke="#dcdcdc" stroke-width="1" fill="none"/><path d="M875.5 802.5h6l-3 3.2z" fill="#666"/><path d="M902 796.5c3 0 5 2 5 5v5c0 2.8-2 4.6-5 4.6s-5-1.8-5-4.6v-5c0-3 2-5 5-5z" fill="#6b5a4e"/><path d="M897 801.5h10M902 796.5v5" stroke="#dcdcdc" stroke-width="1"/><circle cx="1118.5" cy="799" r="1.3" fill="#4a90d9"/><circle cx="1113.5" cy="803" r="1.3" fill="#f0a040"/><circle cx="1122.5" cy="802.5" r="1.3" fill="#f0a040"/><circle cx="1117.5" cy="805" r="1.3" fill="#e04050"/><circle cx="1113.5" cy="808.5" r="1.3" fill="#4a90d9"/><path d="M1136.5 805v-3.5c0-2.2 1.4-3.7 3.3-3.7s3.3 1.5 3.3 3.7" fill="none" stroke="#3a302a" stroke-width="1.8"/><rect x="1138.5" y="803.5" width="10" height="8" rx="1.5" fill="#3a302a"/><path d="M1143.5 806v3" stroke="#fff" stroke-width="1"/><rect x="1159.5" y="797" width="13.5" height="11.5" rx="1.5" fill="none" stroke="#555" stroke-width="1.2"/><path d="M1162.5 800.5h8M1163.5 803.5h6" stroke="#555" stroke-width="1.1"/><path d="M1164.8 808.6l1.5 1.8 1.5-1.8" fill="none" stroke="#555" stroke-width="1"/><path d="M1183 804c2-3.5 4.4-5 7-5s5 1.5 7 5c-2 3.5-4.4 5-7 5s-5-1.5-7-5z" fill="#111"/><circle cx="1190" cy="804" r="2.8" fill="#fff"/><circle cx="1190" cy="804" r="1.6" fill="#111"/></svg>
<div class="a" style="left:82px;top:58px;width:241px;height:107px;box-sizing:border-box;border:5px solid #ed1c24;"></div>
<div class="a" style="left:2px;top:262px;width:718px;height:307px;box-sizing:border-box;border:5px solid #ed1c24;"></div>
</body></html>
